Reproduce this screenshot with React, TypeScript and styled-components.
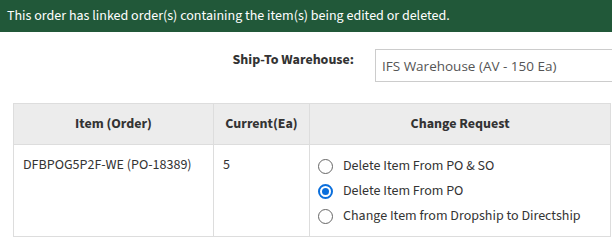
import React from "react";
import styled, { createGlobalStyle } from "styled-components";

const Global = createGlobalStyle`
  html, body { margin: 0; padding: 0; background: #fff; overflow: hidden; }
  body { font-family: "Source Sans 3", "Lato", sans-serif; color: #333; }
`;

const Page = styled.div`
  width: 612px;
  height: 244px;
  overflow: hidden;
`;

const Banner = styled.div`
  height: 32px;
  background: #215839;
  color: #fff;
  font-size: 14px;
  display: flex;
  align-items: center;
  padding-left: 7px;
  white-space: nowrap;
`;

const FormRow = styled.div`
  display: flex;
  align-items: center;
  margin-top: 17px;
  height: 33px;
`;

const Label = styled.label`
  flex: 0 0 354px;
  text-align: right;
  font-weight: 700;
  font-size: 14px;
  color: #333;
  padding-bottom: 11px;
  box-sizing: border-box;
`;

const SelectBox = styled.div`
  margin-left: 21px;
  flex: 0 0 260px;
  height: 33px;
  box-sizing: border-box;
  border: 1px solid #ccc;
  display: flex;
  align-items: center;
  padding-left: 6px;
  font-family: "Open Sans", sans-serif;
  font-size: 13.5px;
  color: #555;
  white-space: nowrap;
`;

const Table = styled.table`
  margin: 21px 0 0 13px;
  width: 597px;
  table-layout: fixed;
  border-collapse: collapse;
  font-size: 14px;
`;

const Th = styled.th`
  height: 40px;
  background: #ececec;
  border: 1px solid #ddd;
  font-weight: 700;
  color: #333;
  text-align: center;
  padding: 0;
`;

const Td = styled.td`
  border: 1px solid #ddd;
  vertical-align: top;
  height: 92px;
  padding: 10px 9px 8px;
  box-sizing: border-box;
  color: #333;
  white-space: nowrap;
`;

const OptionsCell = styled(Td)`
  padding: 12px 8px 8px;
`;

const Options = styled.div`
  display: flex;
  flex-direction: column;
  gap: 7px;
`;

const Option = styled.label`
  display: flex;
  align-items: center;
  gap: 10px;
  height: 18px;
`;

const Radio = styled.span<{ $on?: boolean }>`
  flex: 0 0 15px;
  width: 15px;
  height: 15px;
  box-sizing: border-box;
  border-radius: 50%;
  border: ${(p) => (p.$on ? "2px solid #0b6fdc" : "1px solid #666")};
  display: flex;
  align-items: center;
  justify-content: center;
  &::after {
    content: "";
    width: 7px;
    height: 7px;
    border-radius: 50%;
    background: ${(p) => (p.$on ? "#0b6fdc" : "transparent")};
  }
`;

const options = [
  "Delete Item From PO & SO",
  "Delete Item From PO",
  "Change Item from Dropship to Directship",
];

export default function App() {
  return (
    <Page>
      <Global />
      <Banner>This order has linked order(s) containing the item(s) being edited or deleted.</Banner>
      <FormRow>
        <Label>Ship-To Warehouse:</Label>
        <SelectBox>IFS Warehouse (AV - 150 Ea)</SelectBox>
      </FormRow>
      <Table>
        <colgroup>
          <col style={{ width: 200 }} />
          <col style={{ width: 96 }} />
          <col style={{ width: 301 }} />
        </colgroup>
        <thead>
          <tr>
            <Th>Item (Order)</Th>
            <Th>Current(Ea)</Th>
            <Th>Change Request</Th>
          </tr>
        </thead>
        <tbody>
          <tr>
            <Td>DFBPOG5P2F-WE (PO-18389)</Td>
            <Td>5</Td>
            <OptionsCell>
              <Options>
                {options.map((o, i) => (
                  <Option key={o}>
                    <Radio $on={i === 1} />
                    {o}
                  </Option>
                ))}
              </Options>
            </OptionsCell>
          </tr>
        </tbody>
      </Table>
    </Page>
  );
}
